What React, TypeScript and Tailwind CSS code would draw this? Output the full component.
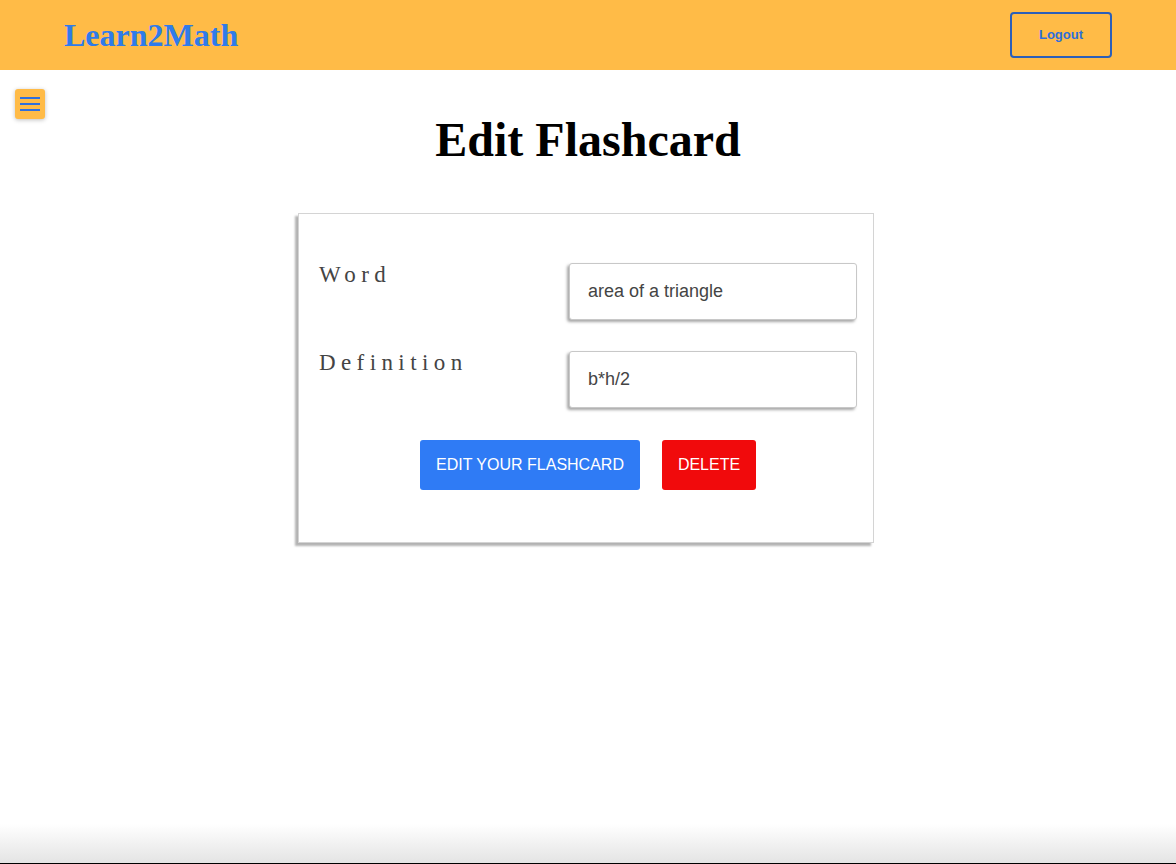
import { useState } from 'react';

const serif = '[font-family:"Liberation_Serif","Times_New_Roman",serif]';

function Header () {
  return (
    <header className="h-[70px] bg-[#ffbb47] flex items-center justify-between pl-[64px] pr-[64px]">
      <span className={`${serif} text-[32px] font-bold text-[#2f7bea] leading-none`}>
        Learn2Math
      </span>
      <button className="w-[102px] h-[46px] rounded-[4px] border-2 border-[#2c5fb8] text-[#2f6fdc] text-[13px] font-bold [font-family:Arial,'Liberation_Sans',sans-serif]">
        Logout
      </button>
    </header>
  );
}

function Field ({
  label,
  value,
  onChange
}: {
  label: string;
  value: string;
  onChange: (v: string) => void;
}) {
  return (
    <div className="flex items-start">
      <label className={`${serif} w-[250px] -mt-[5px] text-[23px] tracking-[5.4px] text-[#444]`}>
        {label}
      </label>
      <input
        value={value}
        onChange={(e) => onChange(e.target.value)}
        className="w-[288px] h-[57px] rounded-[3px] border border-[#c8c8c8] bg-white pl-[18px] text-[18px] text-[#444] [font-family:'Liberation_Sans',Arial,sans-serif] shadow-[-2px_2px_3px_rgba(0,0,0,0.35)] outline-none"
      />
    </div>
  );
}

export default function App () {
  const [card, setCard] = useState<{ word: string; definition: string }>({
    word: 'area of a triangle',
    definition: 'b*h/2'
  });

  return (
    <div className="min-h-screen flex flex-col bg-white">
      <Header />
      <div className="flex-1 relative">
        <button className="absolute left-[15px] top-[19px] w-[30px] h-[30px] rounded-[3px] bg-[#ffbb47] shadow-[0_1px_4px_rgba(0,0,0,0.25)] flex flex-col items-center justify-center gap-[4px]">
          <span className="block w-[20px] h-[2px] bg-[#2f6fdc]" />
          <span className="block w-[20px] h-[2px] bg-[#2f6fdc]" />
          <span className="block w-[20px] h-[2px] bg-[#2f6fdc]" />
        </button>

        <h1 className={`${serif} text-center text-[48px] font-bold text-black mt-[42px] leading-[56px]`}>
          Edit Flashcard
        </h1>

        <form className="mt-[45px] w-[576px] ml-[298px] border border-[#d4d4d4] bg-white shadow-[-3px_3px_2px_rgba(0,0,0,0.3)] pt-[49px] pb-[52px] pl-[20px] pr-[16px]">
          <div className="flex flex-col gap-[31px]">
            <Field
              label="Word"
              value={card.word}
              onChange={(v) => setCard({ ...card, word: v })}
            />
            <Field
              label="Definition"
              value={card.definition}
              onChange={(v) => setCard({ ...card, definition: v })}
            />
          </div>
          <div className="flex justify-center gap-[22px] mt-[32px]">
            <button
              className="w-[220px] h-[50px] rounded-[3px] bg-[#2f7bf5] text-white text-[16px] [font-family:'Liberation_Sans',Arial,sans-serif]"
              onClick={(e) => e.preventDefault()}
            >
              EDIT YOUR FLASHCARD
            </button>
            <button
              className="w-[94px] h-[50px] rounded-[3px] bg-[#f10a0c] text-white text-[16px] [font-family:'Liberation_Sans',Arial,sans-serif]"
              onClick={(e) => e.preventDefault()}
            >
              DELETE
            </button>
          </div>
        </form>
      </div>
      <div className="h-[40px] bg-gradient-to-b from-white to-[#e4e4e4] border-b border-black" />
    </div>
  );
}
